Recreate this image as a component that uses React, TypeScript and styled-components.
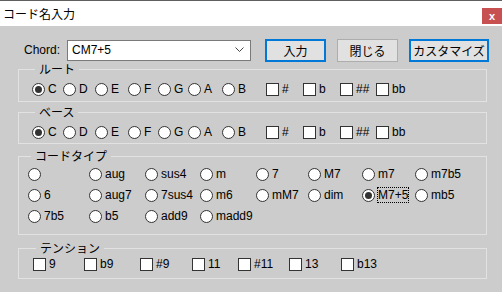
import styled, { createGlobalStyle } from "styled-components";

const GlobalStyle = createGlobalStyle`
  html, body {
    margin: 0;
    padding: 0;
    background: #cccccc;
  }
  body {
    font-family: "Liberation Sans", "Noto Sans CJK JP", sans-serif;
    font-size: 12px;
    color: #000;
  }
`;

const Window = styled.div`
  width: 502px;
  height: 292px;
  background: #cccccc;
  border-top: 1px solid #5f5f5f;
  box-sizing: border-box;
`;

const TitleBar = styled.div`
  height: 25px;
  background: #ffffff;
  display: flex;
  align-items: center;
  justify-content: space-between;
  padding-left: 3px;
`;

const Title = styled.span`
  font-family: "Noto Sans CJK JP", sans-serif;
  font-size: 12px;
  line-height: 14px;
`;

const CloseButton = styled.div`
  width: 20px;
  height: 16px;
  background: #c75050;
  color: #fff;
  font-size: 11px;
  font-weight: bold;
  display: flex;
  align-items: center;
  justify-content: center;
  align-self: flex-end;
  margin-bottom: 2px;
`;

const Body = styled.div`
  padding: 12px 0 0 18px;
`;

const TopRow = styled.div`
  display: flex;
  align-items: center;
  height: 24px;
  padding-left: 6px;
`;

const ChordLabel = styled.span`
  width: 43px;
`;

const Combo = styled.div`
  width: 184px;
  height: 21px;
  box-sizing: border-box;
  background: #fff;
  border: 1px solid #7a7a7a;
  display: flex;
  align-items: center;
  justify-content: space-between;
  padding: 0 6px 0 4px;
`;

const Button = styled.div<{ $w: number; $gap: number; $focus?: boolean }>`
  width: ${(p) => p.$w}px;
  height: 23px;
  box-sizing: border-box;
  margin-left: ${(p) => p.$gap}px;
  background: #e1e1e1;
  border: ${(p) => (p.$focus ? "2px solid #0078d7" : "1px solid #adadad")};
  display: flex;
  align-items: center;
  justify-content: center;
  font-family: "Noto Sans CJK JP", sans-serif;
`;

const Group = styled.fieldset<{ $pt: number; $pb: number; $pl: number; $mt: number }>`
  width: 469px;
  box-sizing: border-box;
  margin: ${(p) => p.$mt}px 0 0 0;
  border: 1px solid #e2e2e2;
  padding: ${(p) => p.$pt}px 0 ${(p) => p.$pb}px ${(p) => p.$pl}px;
  min-width: 0;
`;

const Legend = styled.legend`
  margin-left: 3px;
  padding: 0 4px;
  font-family: "Noto Sans CJK JP", sans-serif;
  line-height: 14px;
`;

const Row = styled.div`
  display: flex;
`;

const TypeGrid = styled.div`
  display: grid;
  grid-template-columns: 61px 56px 55px 56px 52px 54px 53px auto;
  row-gap: 5px;
`;

const Item = styled.label<{ $w?: number }>`
  display: flex;
  align-items: center;
  gap: 3px;
  height: 16px;
  width: ${(p) => (p.$w ? `${p.$w}px` : "auto")};
  line-height: 14px;
`;

const RadioDot = styled.span<{ $on?: boolean }>`
  width: 13px;
  height: 13px;
  box-sizing: border-box;
  border-radius: 50%;
  background: #fff;
  border: 1px solid #333;
  flex: none;
  display: flex;
  align-items: center;
  justify-content: center;
  &::after {
    content: "";
    width: 7px;
    height: 7px;
    border-radius: 50%;
    background: ${(p) => (p.$on ? "#333" : "transparent")};
  }
`;

const Box = styled.span`
  width: 13px;
  height: 13px;
  box-sizing: border-box;
  background: #fff;
  border: 1px solid #333;
  flex: none;
`;

const Text = styled.span<{ $focus?: boolean }>`
  outline: ${(p) => (p.$focus ? "1px dotted #000" : "none")};
  outline-offset: 0;
`;

const notes = [
  { n: "C", w: 31 },
  { n: "D", w: 32 },
  { n: "E", w: 33 },
  { n: "F", w: 30 },
  { n: "G", w: 30 },
  { n: "A", w: 34 },
  { n: "B", w: 44 },
];
const accs = [
  { n: "#", w: 37 },
  { n: "b", w: 37 },
  { n: "##", w: 36 },
  { n: "bb", w: 0 },
];
const types = [
  "", "aug", "sus4", "m", "7", "M7", "m7", "m7b5",
  "6", "aug7", "7sus4", "m6", "mM7", "dim", "M7+5", "mb5",
  "7b5", "b5", "add9", "madd9",
];
const tensions = [
  { n: "9", w: 51 },
  { n: "b9", w: 56 },
  { n: "#9", w: 52 },
  { n: "11", w: 46 },
  { n: "#11", w: 51 },
  { n: "13", w: 52 },
  { n: "b13", w: 0 },
];

function NoteRow() {
  return (
    <Row>
      {notes.map((x, i) => (
        <Item key={x.n} $w={x.w}>
          <RadioDot $on={i === 0} />
          <Text>{x.n}</Text>
        </Item>
      ))}
      {accs.map((x) => (
        <Item key={x.n} $w={x.w || undefined}>
          <Box />
          <Text>{x.n}</Text>
        </Item>
      ))}
    </Row>
  );
}

function Chevron() {
  return (
    <svg width="9" height="6" viewBox="0 0 9 6">
      <path d="M0.5 0.5 L4.5 4.5 L8.5 0.5" fill="none" stroke="#444" strokeWidth="1" />
    </svg>
  );
}

export default function App() {
  return (
    <Window>
      <GlobalStyle />
      <TitleBar>
        <Title>コード名入力</Title>
        <CloseButton>x</CloseButton>
      </TitleBar>
      <Body>
        <TopRow>
          <ChordLabel>Chord:</ChordLabel>
          <Combo>
            <span>CM7+5</span>
            <Chevron />
          </Combo>
          <Button $w={61} $gap={14} $focus>入力</Button>
          <Button $w={61} $gap={11}>閉じる</Button>
          <Button $w={80} $gap={11} $focus>カスタマイズ</Button>
        </TopRow>
        <Group $mt={0} $pt={5} $pb={4} $pl={13}>
          <Legend>ルート</Legend>
          <NoteRow />
        </Group>
        <Group $mt={3} $pt={5} $pb={3} $pl={13}>
          <Legend>ベース</Legend>
          <NoteRow />
        </Group>
        <Group $mt={5} $pt={3} $pb={10} $pl={9}>
          <Legend>コードタイプ</Legend>
          <TypeGrid>
            {types.map((t, i) => (
              <Item key={i}>
                <RadioDot $on={t === "M7+5"} />
                <Text $focus={t === "M7+5"}>{t}</Text>
              </Item>
            ))}
          </TypeGrid>
        </Group>
        <Group $mt={6} $pt={1} $pb={6} $pl={14}>
          <Legend>テンション</Legend>
          <Row>
            {tensions.map((x) => (
              <Item key={x.n} $w={x.w || undefined}>
                <Box />
                <Text>{x.n}</Text>
              </Item>
            ))}
          </Row>
        </Group>
      </Body>
    </Window>
  );
}
